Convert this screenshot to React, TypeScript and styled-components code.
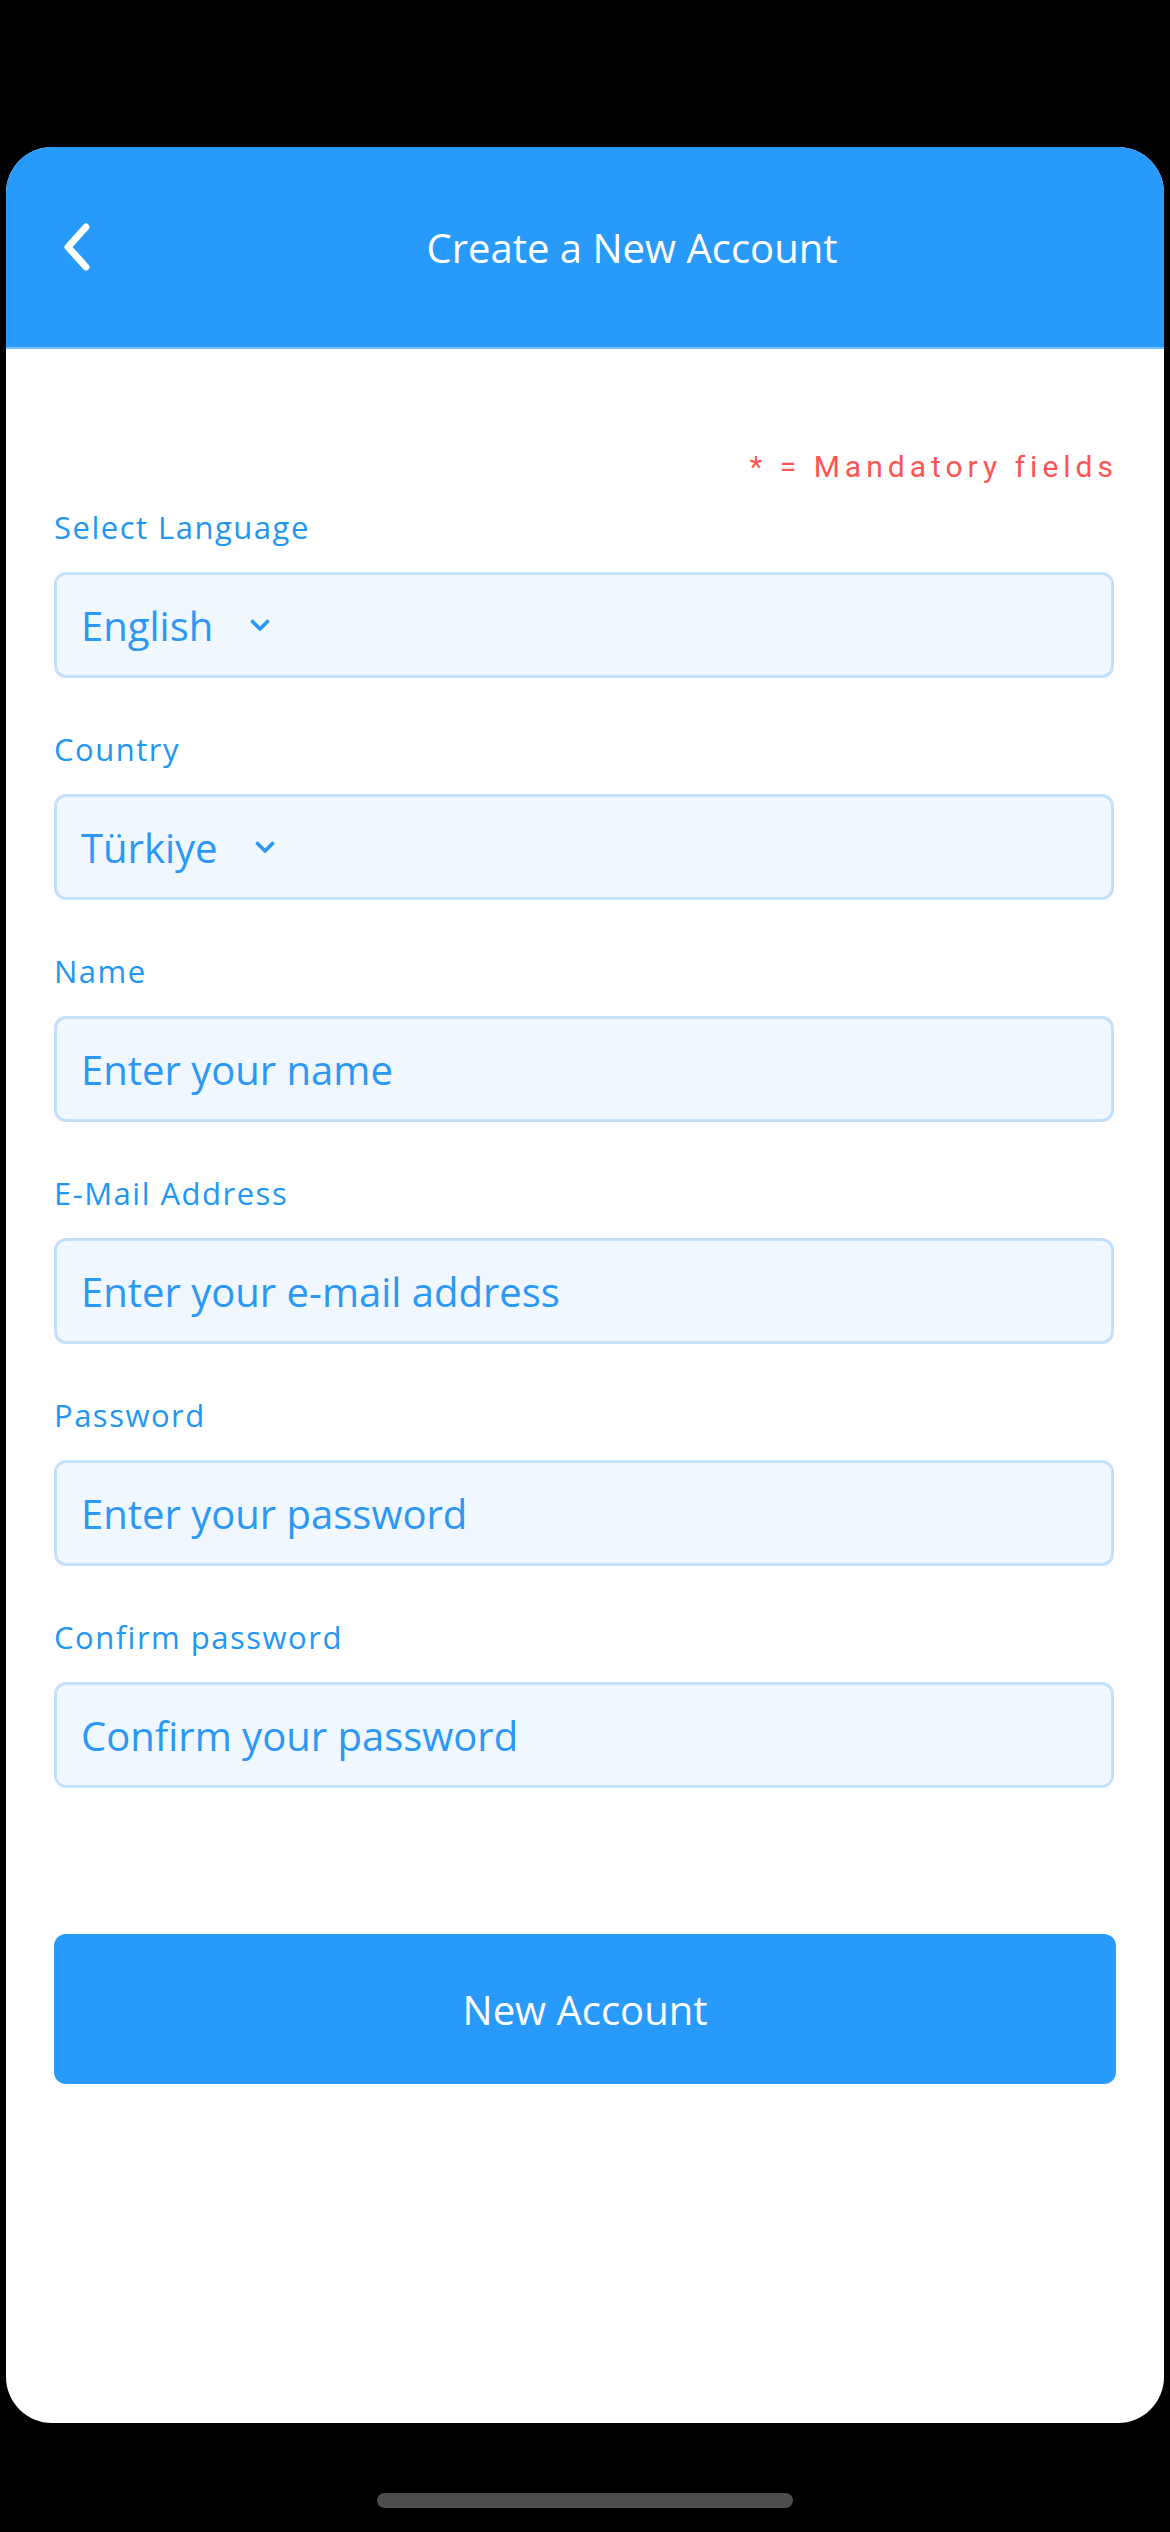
import React from "react";
import styled, { createGlobalStyle } from "styled-components";

const GlobalStyle = createGlobalStyle`
    html, body {
        margin: 0;
        padding: 0;
        background: #000;
    }
    * {
        box-sizing: border-box;
    }
`

const blue = "#289afa"
const textBlue = "#2196f3"
const font = `"Open Sans", "Noto Sans", sans-serif`

const Screen = styled.div`
    width: 1170px;
    height: 2532px;
    background: #000;
    padding: 147px 6px 0;
    display: flex;
    flex-direction: column;
    align-items: center;
`

const Card = styled.div`
    width: 1158px;
    height: 2276px;
    background: #fff;
    border-radius: 46px;
    overflow: hidden;
    display: flex;
    flex-direction: column;
`

const Header = styled.header`
    height: 202px;
    background: ${blue};
    border-bottom: 2px solid #78c0fb;
    display: flex;
    align-items: center;
`

const BackButton = styled.button`
    width: 94px;
    height: 60px;
    padding: 0 0 0 53px;
    border: none;
    background: transparent;
    display: flex;
    align-items: center;
    cursor: pointer;
`

const Title = styled.h1`
    flex: 1;
    margin: 0;
    text-align: center;
    font-family: ${font};
    font-weight: 400;
    font-size: 40px;
    color: #fff;
`

const Form = styled.form`
    padding: 100px 50px 0 48px;
    display: flex;
    flex-direction: column;
`

const Mandatory = styled.div`
    text-align: right;
    font-family: Roboto, "Liberation Sans", sans-serif;
    font-size: 30px;
    line-height: 36px;
    letter-spacing: 5px;
    margin-right: -4px;
    color: #ff5454;
    margin-bottom: 22px;
`

const Field = styled.div`
    display: flex;
    flex-direction: column;
    gap: 25px;
    margin-bottom: 51px;
`

const Label = styled.label`
    font-family: ${font};
    font-size: 31px;
    line-height: 40px;
    letter-spacing: 1.5px;
    color: ${textBlue};
`

const boxStyle = `
    width: 100%;
    height: 106px;
    border: 3px solid #c3e0fb;
    border-radius: 12px;
    background: #f0f7fe;
    padding: 0 24px;
    font-family: ${font};
    font-size: 40px;
    color: #2b98f5;
`

const Input = styled.input`
    ${boxStyle}
    outline: none;
    &::placeholder {
        color: #2b98f5;
        opacity: 1;
    }
`

const Select = styled.div`
    ${boxStyle}
    display: flex;
    align-items: center;
    gap: 37px;
    cursor: pointer;
`

const SubmitButton = styled.button`
    margin-top: 95px;
    height: 150px;
    width: 1062px;
    border: none;
    border-radius: 12px;
    background: ${blue};
    color: #fff;
    font-family: ${font};
    font-size: 40px;
    cursor: pointer;
`

const HomeBar = styled.div`
    margin-top: 70px;
    width: 416px;
    height: 15px;
    border-radius: 8px;
    background: #4d4d4d;
`

const Chevron = () => (
    <svg width="20" height="13" viewBox="0 0 20 13" fill="none">
        <path d="M2.5 2.5 L10 10 L17.5 2.5" stroke="#2b98f5" strokeWidth="3.6" strokeLinecap="round" strokeLinejoin="round" />
    </svg>
)

const BackIcon = () => (
    <svg width="32" height="48" viewBox="0 0 32 48" fill="none">
        <path d="M27 4 L9 24 L27 44" stroke="#fff" strokeWidth="7" strokeLinecap="round" strokeLinejoin="round" />
    </svg>
)

const fields = [
    { label: "Name", placeholder: "Enter your name", type: "text" },
    { label: "E-Mail Address", placeholder: "Enter your e-mail address", type: "email" },
    { label: "Password", placeholder: "Enter your password", type: "password" },
    { label: "Confirm password", placeholder: "Confirm your password", type: "password" },
]

function App() {
    return (
        <Screen>
            <GlobalStyle />
            <Card>
                <Header>
                    <BackButton aria-label="Back">
                        <BackIcon />
                    </BackButton>
                    <Title>Create a New Account</Title>
                </Header>
                <Form onSubmit={(e) => e.preventDefault()}>
                    <Mandatory>* = Mandatory fields</Mandatory>
                    <Field>
                        <Label>Select Language</Label>
                        <Select>
                            <span>English</span>
                            <Chevron />
                        </Select>
                    </Field>
                    <Field>
                        <Label>Country</Label>
                        <Select>
                            <span>Türkiye</span>
                            <Chevron />
                        </Select>
                    </Field>
                    {fields.map((f) => (
                        <Field key={f.label}>
                            <Label>{f.label}</Label>
                            <Input type={f.type} placeholder={f.placeholder} />
                        </Field>
                    ))}
                    <SubmitButton type="submit">New Account</SubmitButton>
                </Form>
            </Card>
            <HomeBar />
        </Screen>
    )
}

export default App
